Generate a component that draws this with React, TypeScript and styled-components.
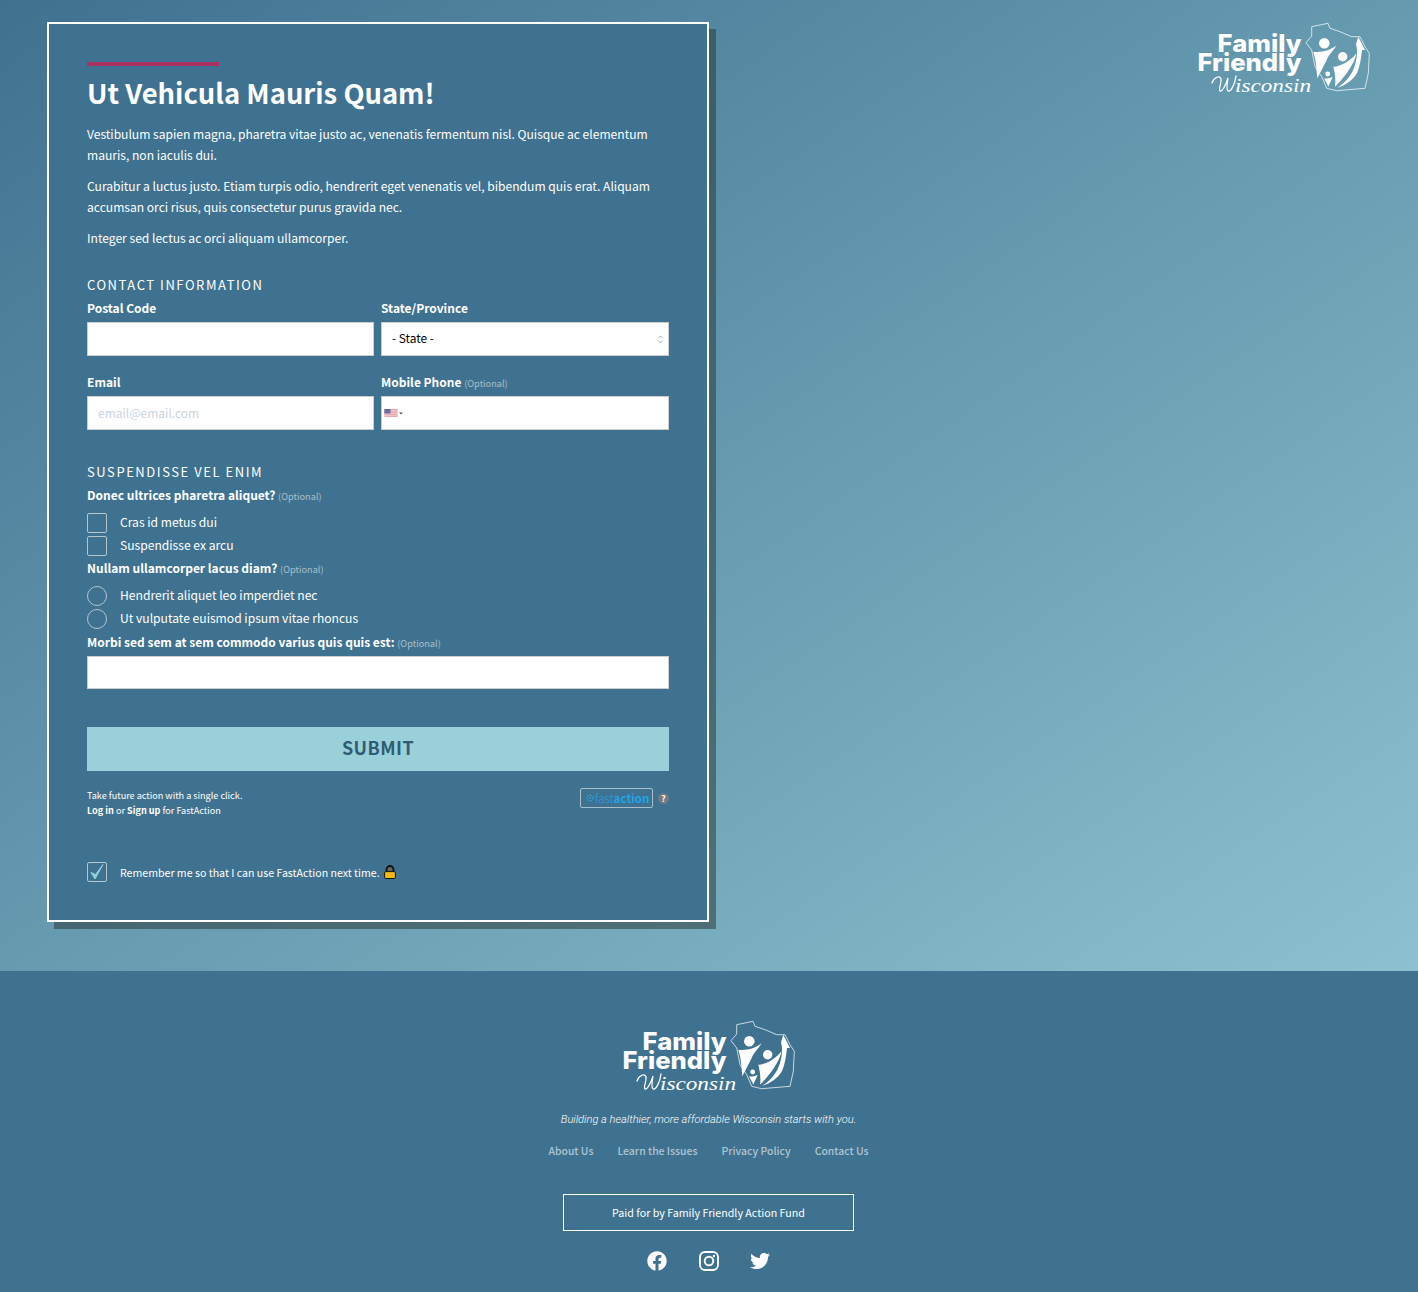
import React from "react";
import styled, { createGlobalStyle } from "styled-components";
import { FaFacebook, FaTwitter } from "react-icons/fa";

const Global = createGlobalStyle`
  html, body { margin: 0; padding: 0; }
  body { font-family: "Noto Sans CJK SC", "Noto Sans", sans-serif; color: #fff; background: #3f7290; }
  * { box-sizing: border-box; }
`;

const Main = styled.main`
  height: 971px;
  padding: 22px 48px 0 47px;
  display: flex;
  justify-content: space-between;
  align-items: flex-start;
  background: linear-gradient(to bottom right, #3f7290, #8cc2cf);
`;
const Card = styled.section`
  width: 662px;
  height: 900px;
  padding: 38px 38px 0;
  background: #3f7290;
  border: 2px solid #fff;
  box-shadow: 7px 7px 0 rgba(40, 50, 50, 0.5);
`;
const Rule = styled.div`
  width: 132px;
  height: 4px;
  background: #a73260;
`;
const Title = styled.h1`
  margin: 6px 0 11px;
  font-size: 27.4px;
  line-height: 40px;
  font-weight: 700;
`;
const Para = styled.p`
  margin: 0 0 10px;
  font-size: 12.07px;
  line-height: 21px;
`;
const SectionHead = styled.h2<{ $top: number }>`
  margin: ${(p) => p.$top}px 0 3px;
  font-size: 13px;
  line-height: 20px;
  font-weight: 400;
  letter-spacing: 1.55px;
  text-transform: uppercase;
`;
const Grid = styled.div`
  display: grid;
  grid-template-columns: 287px 288px;
  column-gap: 7px;
  row-gap: 16px;
`;
const Field = styled.div`
  display: flex;
  flex-direction: column;
`;
const Label = styled.label`
  display: block;
  height: 24px;
  font-size: 12px;
  line-height: 20px;
  font-weight: 700;
  white-space: nowrap;
`;
const Optional = styled.span`
  font-size: 9.2px;
  font-weight: 400;
  color: #a9bfcb;
`;
const Input = styled.input<{ $h?: number }>`
  width: 100%;
  height: ${(p) => p.$h ?? 34}px;
  border: 1px solid #ccc;
  background: #fff;
  padding: 0 10px 2px;
  font: 400 12px "Noto Sans CJK SC", sans-serif;
  outline: none;
  &::placeholder { color: #c9d3e0; opacity: 1; }
`;
const SelectBox = styled.div`
  position: relative;
  height: 34px;
  border: 1px solid #ccc;
  background: #fff;
`;
const Select = styled.select`
  appearance: none;
  width: 100%;
  height: 100%;
  border: 0;
  background: transparent;
  padding: 0 10px 4px;
  color: #000;
  font: 400 11.9px "Noto Sans CJK SC", sans-serif;
`;
const Arrows = styled.svg`
  position: absolute;
  right: 5px;
  top: 12px;
`;
const PhoneBox = styled.div`
  height: 34px;
  border: 1px solid #ccc;
  background: #fff;
  padding-left: 2px;
  display: flex;
  align-items: center;
  gap: 1px;
`;
const OptionRow = styled.div`
  display: flex;
  align-items: center;
  height: 23px;
  gap: 13px;
  font-size: 12.1px;
`;
const OptionText = styled.span`
  padding-bottom: 2px;
`;
const Check = styled.span`
  width: 20px;
  height: 20px;
  flex: none;
  border: 1px solid #b4c6d0;
  border-radius: 2px;
  display: flex;
`;
const Radio = styled(Check)`
  border-radius: 50%;
`;
const OptionGroup = styled.div`
  margin: 2px 0 1px;
`;
const WideField = styled.div`
  margin-top: 2px;
`;
const Submit = styled.button`
  display: block;
  width: 100%;
  height: 44px;
  margin-top: 38px;
  padding: 0 0 4px;
  border: 0;
  background: #9ad0da;
  color: #2f5c72;
  font: 700 18px/40px "Noto Sans CJK SC", sans-serif;
  letter-spacing: 0.45px;
`;
const FastRow = styled.div`
  display: flex;
  justify-content: space-between;
  margin-top: 17px;
`;
const FastText = styled.div`
  font-size: 9.1px;
  line-height: 15px;
  b { font-weight: 700; }
`;
const FastBadge = styled.div`
  display: flex;
  align-items: center;
  gap: 5px;
  height: 20px;
`;
const FastBox = styled.div`
  width: 73px;
  height: 20px;
  border: 1px solid #a9c0cc;
  border-radius: 2px;
  display: flex;
  align-items: center;
  padding-left: 5px;
  font-size: 11.6px;
  line-height: 18px;
  color: #23a3e6;
  white-space: nowrap;
  b { font-weight: 700; }
  i { font-style: normal; font-weight: 300; margin-left: 1px; }
  svg { flex: none; }
`;
const Help = styled.span`
  width: 11px;
  height: 11px;
  border-radius: 50%;
  background: #77797f;
  color: #fff;
  font-size: 8.5px;
  font-weight: 700;
  line-height: 11px;
  text-align: center;
`;
const RememberRow = styled.div`
  display: flex;
  align-items: center;
  gap: 13px;
  height: 20px;
  margin-top: 44px;
  font-size: 10.6px;
`;
const RememberText = styled.span`
  display: flex;
  align-items: center;
  gap: 4px;
  svg { flex: none; }
`;
const Footer = styled.footer`
  height: 321px;
  padding: 49px 1px 0 0;
  background: #3f7290;
  display: flex;
  flex-direction: column;
  align-items: center;
`;
const Tagline = styled.p`
  margin: 17px 0 0;
  font: italic 300 11.1px/16px Roboto, sans-serif;
`;
const Nav = styled.nav`
  display: flex;
  gap: 24px;
  margin-top: 15px;
  font-size: 10.45px;
  line-height: 16px;
  font-weight: 500;
  color: #b0c5d0;
`;
const PaidBox = styled.div`
  width: 291px;
  height: 37px;
  margin-top: 35px;
  border: 1px solid #fff;
  font-size: 10.7px;
  line-height: 35px;
  text-align: center;
`;
const Social = styled.div`
  display: flex;
  align-items: center;
  gap: 31.5px;
  margin-top: 20px;
  font-size: 20px;
  line-height: 0;
`;
const LogoSvg = styled.svg`
  display: block;
  flex: none;
`;

const Logo = () => (
  <LogoSvg width="173" height="75" viewBox="0 0 173 75">
    <g fill="#fff" fontFamily="Inter, sans-serif" fontWeight="800" fontSize="24">
      <text x="104.5" y="29.5" textAnchor="end" textLength="84" lengthAdjust="spacingAndGlyphs">Family</text>
      <text x="104.5" y="48.5" textAnchor="end" textLength="104" lengthAdjust="spacingAndGlyphs">Friendly</text>
    </g>
    <text x="38" y="70" fill="#fff" fontFamily="'Liberation Serif', serif" fontStyle="italic" fontSize="19" textLength="76" lengthAdjust="spacingAndGlyphs">isconsin</text>
    <path d="M15 61c2-6 8-8 9-4 1 4-3 10-1 12 2 1 6-6 8-13-1 6-2 12 0 13 3 1 7-7 8-15" fill="none" stroke="#fff" strokeWidth="1.3" strokeLinecap="round" />
    <path d="M114.7 4.700 131 1.300l2 5 10 3.400 11.700 5h8.300l5 10 4.300 6.600-1 20-3.300 15-28.300 2.400-10-2.400-5-11.600-6.700-10-3.300-16.700-5.700-7.300 5.700-6.700z" fill="none" stroke="#fff" strokeOpacity=".8" strokeWidth=".9" />
    <g fill="#fff">
      <circle cx="127.300" cy="21.300" r="5.300" />
      <path d="M116.300 29.700c8 1 17-1 23.400-6.700-3 6-8 9-10 15-3 6-6 12-9.400 18.300-1-9-1-18-4-26.600z" />
      <circle cx="145.700" cy="34.700" r="4.700" />
      <path d="M136.300 44.700c8 0 17-6 23.400-13.400-2 8-6 14-10 20-4 5-7 9-11.700 13.400 1-7 0-13-1.700-20z" />
      <path d="M161.300 14.700 168 28h-3c-1 9-2 16-5 23-4 7-11 12-20 15 9-6 15-13 18-23 2-7 3-14 1-21z" />
      <circle cx="130.700" cy="52" r="2.400" />
      <path d="M127 56.300c3 .5 6 0 8.700-1.600-1 3-3 6-4.400 10-1-3-3-5-4.300-8.400z" />
    </g>
  </LogoSvg>
);

const Flag = () => (
  <svg width="14" height="8" viewBox="0 0 15 9">
    <rect width="15" height="9" fill="#e8a0ac" />
    <path d="M0 1.500h15M0 3.500h15M0 5.500h15M0 7.500h15" stroke="#fff" strokeOpacity=".5" strokeWidth=".9" />
    <rect width="7" height="5" fill="#6b6f9f" />
  </svg>
);

const Caret = () => (
  <svg width="4" height="3" viewBox="0 0 4 3">
    <path d="M0 .5h4L2 2.500z" fill="#555" />
  </svg>
);

const Lock = () => (
  <svg width="12" height="14" viewBox="0 0 12 14">
    <path d="M2.500 7V4.500a3.500 3.500 0 0 1 7 0V7" fill="#666" stroke="#111" strokeWidth="1.800" />
    <rect x=".6" y="6.600" width="10.800" height="6.900" rx="1.200" fill="#f6b912" stroke="#111" />
  </svg>
);

const Instagram = () => (
  <svg width="20" height="20" viewBox="0 0 20 20">
    <rect x="1" y="1" width="18" height="18" rx="5" fill="none" stroke="#fff" strokeWidth="1.900" />
    <circle cx="10" cy="10" r="4.300" fill="none" stroke="#fff" strokeWidth="1.900" />
    <circle cx="15" cy="5" r="1.200" fill="#fff" />
  </svg>
);

export default function App() {
  return (
    <>
      <Global />
      <Main>
        <Card>
          <Rule />
          <Title>Ut Vehicula Mauris Quam!</Title>
          <Para>Vestibulum sapien magna, pharetra vitae justo ac, venenatis fermentum nisl. Quisque ac elementum mauris, non iaculis dui.</Para>
          <Para>Curabitur a luctus justo. Etiam turpis odio, hendrerit eget venenatis vel, bibendum quis erat. Aliquam accumsan orci risus, quis consectetur purus gravida nec.</Para>
          <Para>Integer sed lectus ac orci aliquam ullamcorper.</Para>
          <SectionHead $top={27}>Contact Information</SectionHead>
          <Grid>
            <Field>
              <Label>Postal Code</Label>
              <Input />
            </Field>
            <Field>
              <Label>State/Province</Label>
              <SelectBox>
                <Select defaultValue="">
                  <option value="">- State -</option>
                </Select>
                <Arrows width="5" height="9" viewBox="0 0 5 9">
                  <path d="M.5 3 2.500 1l2 2M.5 6l2 2 2-2" fill="none" stroke="#aaa" />
                </Arrows>
              </SelectBox>
            </Field>
            <Field>
              <Label>Email</Label>
              <Input placeholder="email@email.com" />
            </Field>
            <Field>
              <Label>Mobile Phone <Optional>(Optional)</Optional></Label>
              <PhoneBox>
                <Flag />
                <Caret />
              </PhoneBox>
            </Field>
          </Grid>
          <SectionHead $top={32}>Suspendisse vel enim</SectionHead>
          <Label>Donec ultrices pharetra aliquet? <Optional>(Optional)</Optional></Label>
          <OptionGroup>
            <OptionRow><Check /><OptionText>Cras id metus dui</OptionText></OptionRow>
            <OptionRow><Check /><OptionText>Suspendisse ex arcu</OptionText></OptionRow>
          </OptionGroup>
          <Label>Nullam ullamcorper lacus diam? <Optional>(Optional)</Optional></Label>
          <OptionGroup>
            <OptionRow><Radio /><OptionText>Hendrerit aliquet leo imperdiet nec</OptionText></OptionRow>
            <OptionRow><Radio /><OptionText>Ut vulputate euismod ipsum vitae rhoncus</OptionText></OptionRow>
          </OptionGroup>
          <WideField>
            <Label>Morbi sed sem at sem commodo varius quis quis est: <Optional>(Optional)</Optional></Label>
            <Input $h={33} />
          </WideField>
          <Submit>SUBMIT</Submit>
          <FastRow>
            <FastText>
              Take future action with a single click.<br />
              <b>Log in</b> or <b>Sign up</b> for FastAction
            </FastText>
            <FastBadge>
              <FastBox>
                <svg width="8" height="8" viewBox="0 0 8 8"><circle cx="4" cy="4" r="3" fill="none" stroke="#23a3e6" strokeWidth="1.200" strokeDasharray="1.500 .6" /><circle cx="4" cy="4" r="1" fill="#23a3e6" /></svg>
                <i>fast</i><b>action</b>
              </FastBox>
              <Help>?</Help>
            </FastBadge>
          </FastRow>
          <RememberRow>
            <Check>
              <svg width="18" height="18" viewBox="0 0 18 18">
                <path d="M3 9.500 7 16 15 1.500 7.500 11.500z" fill="#8fd0dc" stroke="#8fd0dc" strokeWidth="1" strokeLinejoin="round" />
              </svg>
            </Check>
            <RememberText>Remember me so that I can use FastAction next time. <Lock /></RememberText>
          </RememberRow>
        </Card>
        <Logo />
      </Main>
      <Footer>
        <Logo />
        <Tagline>Building a healthier, more affordable Wisconsin starts with you.</Tagline>
        <Nav>
          <span>About Us</span>
          <span>Learn the Issues</span>
          <span>Privacy Policy</span>
          <span>Contact Us</span>
        </Nav>
        <PaidBox>Paid for by Family Friendly Action Fund</PaidBox>
        <Social>
          <FaFacebook />
          <Instagram />
          <FaTwitter />
        </Social>
      </Footer>
    </>
  );
}
